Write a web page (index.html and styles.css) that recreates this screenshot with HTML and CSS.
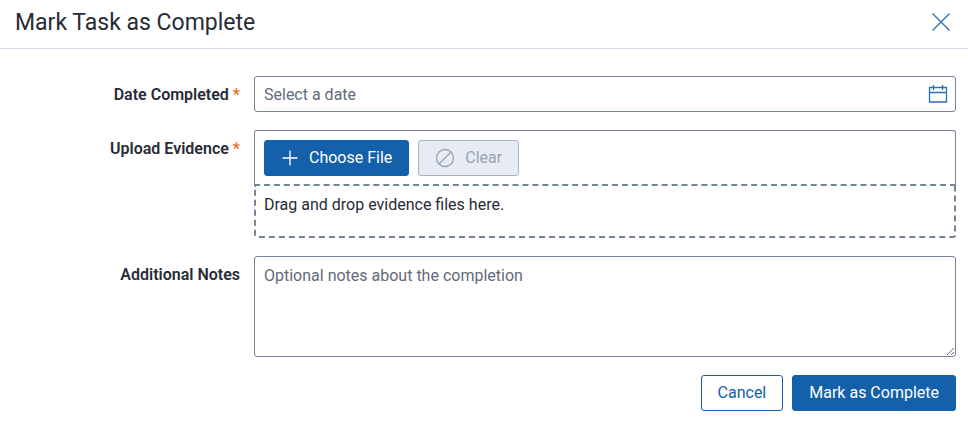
FILE: index.html
```html
<!DOCTYPE html>
<html lang="en">
<head>
  <meta charset="UTF-8" />
  <meta name="viewport" content="width=device-width, initial-scale=1.0"/>
  <title>Mark Task as Complete</title>
  <link rel="stylesheet" href="styles.css">
</head>
<body>
  <header class="dialog-header">
    <h1>Mark Task as Complete</h1>
    <button type="button" class="close" aria-label="Close">
      <svg width="20" height="20" viewBox="0 0 20 20"><path d="M1.5 1.5l17 17M18.5 1.5l-17 17"/></svg>
    </button>
  </header>

  <form class="dialog-form">
    <div class="row">
      <label for="date">Date Completed <span class="required">*</span></label>
      <div class="date-field">
        <input type="text" id="date" placeholder="Select a date" />
        <button type="button" class="calendar" aria-label="Choose date">
          <svg width="20" height="20" viewBox="0 0 20 20"><path d="M1.5 3.5h17v14.5h-17zM1.5 8.5h17M5.5 1v5M14.5 1v5"/></svg>
        </button>
      </div>
    </div>

    <div class="row">
      <label for="choose">Upload Evidence <span class="required">*</span></label>
      <div class="upload">
        <div class="upload-bar">
          <button type="button" id="choose" class="btn primary">
            <svg width="18" height="18" viewBox="0 0 18 18"><path d="M9 1.5v15M1.5 9h15"/></svg>
            Choose File
          </button>
          <button type="button" class="btn clear" disabled>
            <svg width="20" height="20" viewBox="0 0 20 20"><circle cx="10" cy="10" r="8.5"/><path d="M16 4L4 16"/></svg>
            Clear
          </button>
        </div>
        <div class="drop-area">Drag and drop evidence files here.</div>
      </div>
    </div>

    <div class="row">
      <label for="notes">Additional Notes</label>
      <textarea id="notes" placeholder="Optional notes about the completion"></textarea>
    </div>

    <div class="actions">
      <button type="button" class="btn secondary">Cancel</button>
      <button type="submit" class="btn primary">Mark as Complete</button>
    </div>
  </form>
</body>
</html>
```

FILE: styles.css
```css
* {
  box-sizing: border-box;
}

body {
  margin: 0;
  font-family: Roboto, "Liberation Sans", sans-serif;
  font-size: 16px;
  line-height: 20px;
  color: #272c36;
  background: #fff;
}

button, input, textarea {
  font: inherit;
}

svg {
  display: block;
  fill: none;
  stroke: currentColor;
  stroke-width: 1.3;
}

.dialog-header {
  display: flex;
  align-items: center;
  justify-content: space-between;
  height: 49px;
  padding: 0 17px 4px 15px;
  border-bottom: 1px solid #d2dbe8;
}

h1 {
  margin: 0;
  padding-top: 2px;
  font-size: 23px;
  line-height: 28px;
  font-weight: 400;
}

.close, .calendar {
  padding: 0;
  border: none;
  background: none;
  color: #2a70b5;
  cursor: pointer;
}

.dialog-form {
  display: flex;
  flex-direction: column;
  gap: 18px;
  padding: 27px 12px 12px;
}

.row {
  display: grid;
  grid-template-columns: 228px 1fr;
  gap: 14px;
}

label {
  padding-top: 9px;
  font-weight: 600;
  text-align: right;
}

.required {
  color: #ee6a1f;
}

.date-field {
  display: flex;
  align-items: center;
  height: 36px;
  padding-right: 7px;
  border: 1px solid #75839a;
  border-radius: 3px;
}

.date-field input {
  flex: 1;
  padding: 2px 9px 0;
  border: none;
  outline: none;
  background: none;
}

::placeholder {
  color: #626b7a;
  opacity: 1;
}

.upload-bar {
  display: flex;
  gap: 9px;
  padding: 9px 9px 8px;
  border: 1px solid #75839a;
  border-bottom: none;
  border-radius: 3px 3px 0 0;
}

.drop-area {
  height: 54px;
  padding: 9px 8px;
  border: 2px dashed #75839a;
  border-radius: 0 0 3px 3px;
}

.btn {
  display: flex;
  align-items: center;
  gap: 10px;
  height: 36px;
  padding: 0 16px;
  border: 1px solid #1460aa;
  border-radius: 3px;
  cursor: pointer;
}

.primary {
  background: #1460aa;
  color: #fff;
}

.secondary {
  background: #fff;
  color: #1460aa;
}

.clear {
  border-color: #a9b5c7;
  background: #e7ecf4;
  color: #98a3b6;
  cursor: default;
}

textarea {
  display: block;
  width: 100%;
  height: 101px;
  padding: 9px;
  border: 1px solid #75839a;
  border-radius: 3px;
  resize: vertical;
}

.actions {
  display: flex;
  justify-content: flex-end;
  gap: 9px;
}
```
